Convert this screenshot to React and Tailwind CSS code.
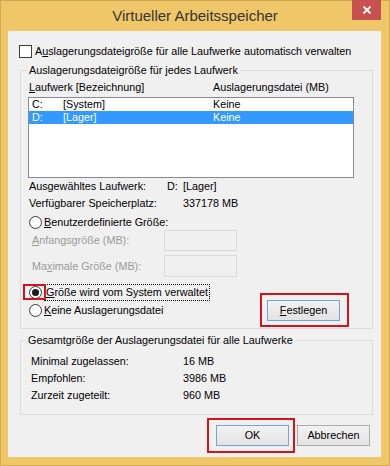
import React from "react";

function Radio({ checked }) {
  return (
    <span className="w-[13px] h-[13px] rounded-full border border-[#3c3c3c] bg-white flex items-center justify-center shrink-0">
      {checked && <span className="w-[7px] h-[7px] rounded-full bg-[#1b1b1b]" />}
    </span>
  );
}

function Btn({ children, primary, className = "" }) {
  return (
    <div
      className={
        "w-[73px] h-[21px] flex items-center justify-center border bg-gradient-to-b from-[#f2f2f2] to-[#e3e3e3] text-black " +
        (primary ? "border-[#6fa6dc] " : "border-[#acacac] ") +
        className
      }
    >
      {children}
    </div>
  );
}

export default function App() {
  return (
    <div className="w-[390px] h-[466px] bg-[#efc668] border border-[#d3aa52] flex flex-col font-[family-name:'Liberation_Sans',Arial,sans-serif] text-[10.8px] leading-[13px] text-black select-none">
      {/* Title bar */}
      <div className="h-[30px] grid grid-cols-[1fr_auto_1fr] items-start">
        <div />
        <div className="h-[28px] flex items-center text-[15px] text-[#353535]">Virtueller Arbeitsspeicher</div>
        <div className="flex justify-end pr-[8px]">
          <div className="w-[29px] h-[20px] -mt-[1px] bg-[#c75050] flex items-center justify-center">
            <svg width="10" height="8" viewBox="0 0 10 8">
              <path d="M1.5 0.5 L8.5 7.5 M8.5 0.5 L1.5 7.5" stroke="white" strokeWidth="1.8" fill="none" />
            </svg>
          </div>
        </div>
      </div>

      {/* Client area */}
      <div className="ml-[7px] w-[373px] h-[426px] bg-[#f0f0f0] flex flex-col">
        {/* Checkbox */}
        <div className="mt-[13px] h-[15px] pl-[11px] flex items-center">
          <span className="w-[13px] h-[13px] border border-[#3c3c3c] bg-white shrink-0" />
          <span className="ml-[3px]">
            A<span className="underline">u</span>slagerungsdateigröße für alle Laufwerke automatisch verwalten
          </span>
        </div>

        {/* Group 1 */}
        <div className="relative mt-[11px] ml-[12px] w-[353px] h-[259px] border border-[#dcdcdc] flex flex-col">
          <span className="absolute -top-[8px] left-[6px] px-[2px] bg-[#f0f0f0] leading-[15px]">
            Auslagerungsdateigröße für jedes Laufwerk
          </span>

          <div className="mt-[8px] h-[16px] pl-[8px] flex items-center">
            <span className="w-[184px]">
              <span className="underline">L</span>aufwerk [Bezeichnung]
            </span>
            <span>Auslagerungsdatei (MB)</span>
          </div>

          <div className="mt-[2px] ml-[7px] w-[326px] h-[81px] border border-[#868a92] bg-white flex flex-col">
            <div className="h-[13px] pl-[3px] flex items-center">
              <span className="w-[31px]">C:</span>
              <span className="w-[150px]">[System]</span>
              <span>Keine</span>
            </div>
            <div className="h-[13px] pl-[3px] flex items-center bg-[#3399ff] text-white">
              <span className="w-[31px]">D:</span>
              <span className="w-[150px]">[Lager]</span>
              <span>Keine</span>
            </div>
          </div>

          <div className="pl-[8px] grid grid-cols-[138px_16px_auto] auto-rows-[17px] items-center">
            <span>Ausgewähltes Laufwerk:</span>
            <span>D:</span>
            <span>[Lager]</span>
            <span>Verfügbarer Speicherplatz:</span>
            <span />
            <span>337178 MB</span>
          </div>

          <div className="mt-[2px] h-[16px] pl-[8px] flex items-center">
            <Radio />
            <span className="ml-[2px]">
              <span className="underline">B</span>enutzerdefinierte Größe:
            </span>
          </div>

          <div className="h-[21px] pl-[11px] flex items-center text-[#9a9a9a]">
            <span className="w-[132px]">
              <span className="underline">A</span>nfangsgröße (MB):
            </span>
            <span className="w-[73px] h-[21px] border border-[#d9d9d9] bg-[#f0f0f0]" />
          </div>

          <div className="mt-[4px] h-[22px] pl-[11px] flex items-center text-[#9a9a9a]">
            <span className="w-[132px]">
              Ma<span className="underline">x</span>imale Größe (MB):
            </span>
            <span className="w-[73px] h-[22px] border border-[#d9d9d9] bg-[#f0f0f0]" />
          </div>

          <div className="mt-[7px] h-[37px] pl-[8px] pr-[32px] flex justify-between">
            <div className="flex flex-col gap-[2px]">
              <div className="h-[16px] flex items-center">
                <span className="relative">
                  <Radio checked />
                  <span className="absolute -left-[6px] -top-[2px] w-[23px] h-[16px] border-2 border-[#d4141c]" />
                </span>
                <span className="ml-[2px] h-[17px] px-[1px] flex items-center border border-dotted border-black">
                  <span>
                    <span className="underline">G</span>röße wird vom System verwaltet
                  </span>
                </span>
              </div>
              <div className="h-[16px] flex items-center">
                <Radio />
                <span className="ml-[2px]">
                  <span className="underline">K</span>eine Auslagerungsdatei
                </span>
              </div>
            </div>
            <div className="relative self-end">
              <Btn primary>
                <span>
                  <span className="underline">F</span>estlegen
                </span>
              </Btn>
              <span className="absolute -left-[7px] -top-[7px] w-[89px] h-[34px] border-2 border-[#d4141c]" />
            </div>
          </div>
        </div>

        {/* Group 2 */}
        <div className="relative mt-[11px] ml-[12px] w-[353px] h-[75px] border border-[#dcdcdc] flex flex-col">
          <span className="absolute -top-[8px] left-[5px] px-[2px] bg-[#f0f0f0] leading-[15px]">
            Gesamtgröße der Auslagerungsdatei für alle Laufwerke
          </span>
          <div className="mt-[12px] pl-[10px] grid grid-cols-[152px_auto] auto-rows-[17px] items-center">
            <span>Minimal zugelassen:</span>
            <span>16 MB</span>
            <span>Empfohlen:</span>
            <span>3986 MB</span>
            <span>Zurzeit zugeteilt:</span>
            <span>960 MB</span>
          </div>
        </div>

        {/* Buttons */}
        <div className="mt-[10px] pr-[11px] flex justify-end gap-[8px]">
          <div className="relative">
            <Btn primary>OK</Btn>
            <span className="absolute -left-[9px] -top-[7px] w-[88px] h-[35px] border-2 border-[#d4141c]" />
          </div>
          <Btn>Abbrechen</Btn>
        </div>
      </div>
    </div>
  );
}
